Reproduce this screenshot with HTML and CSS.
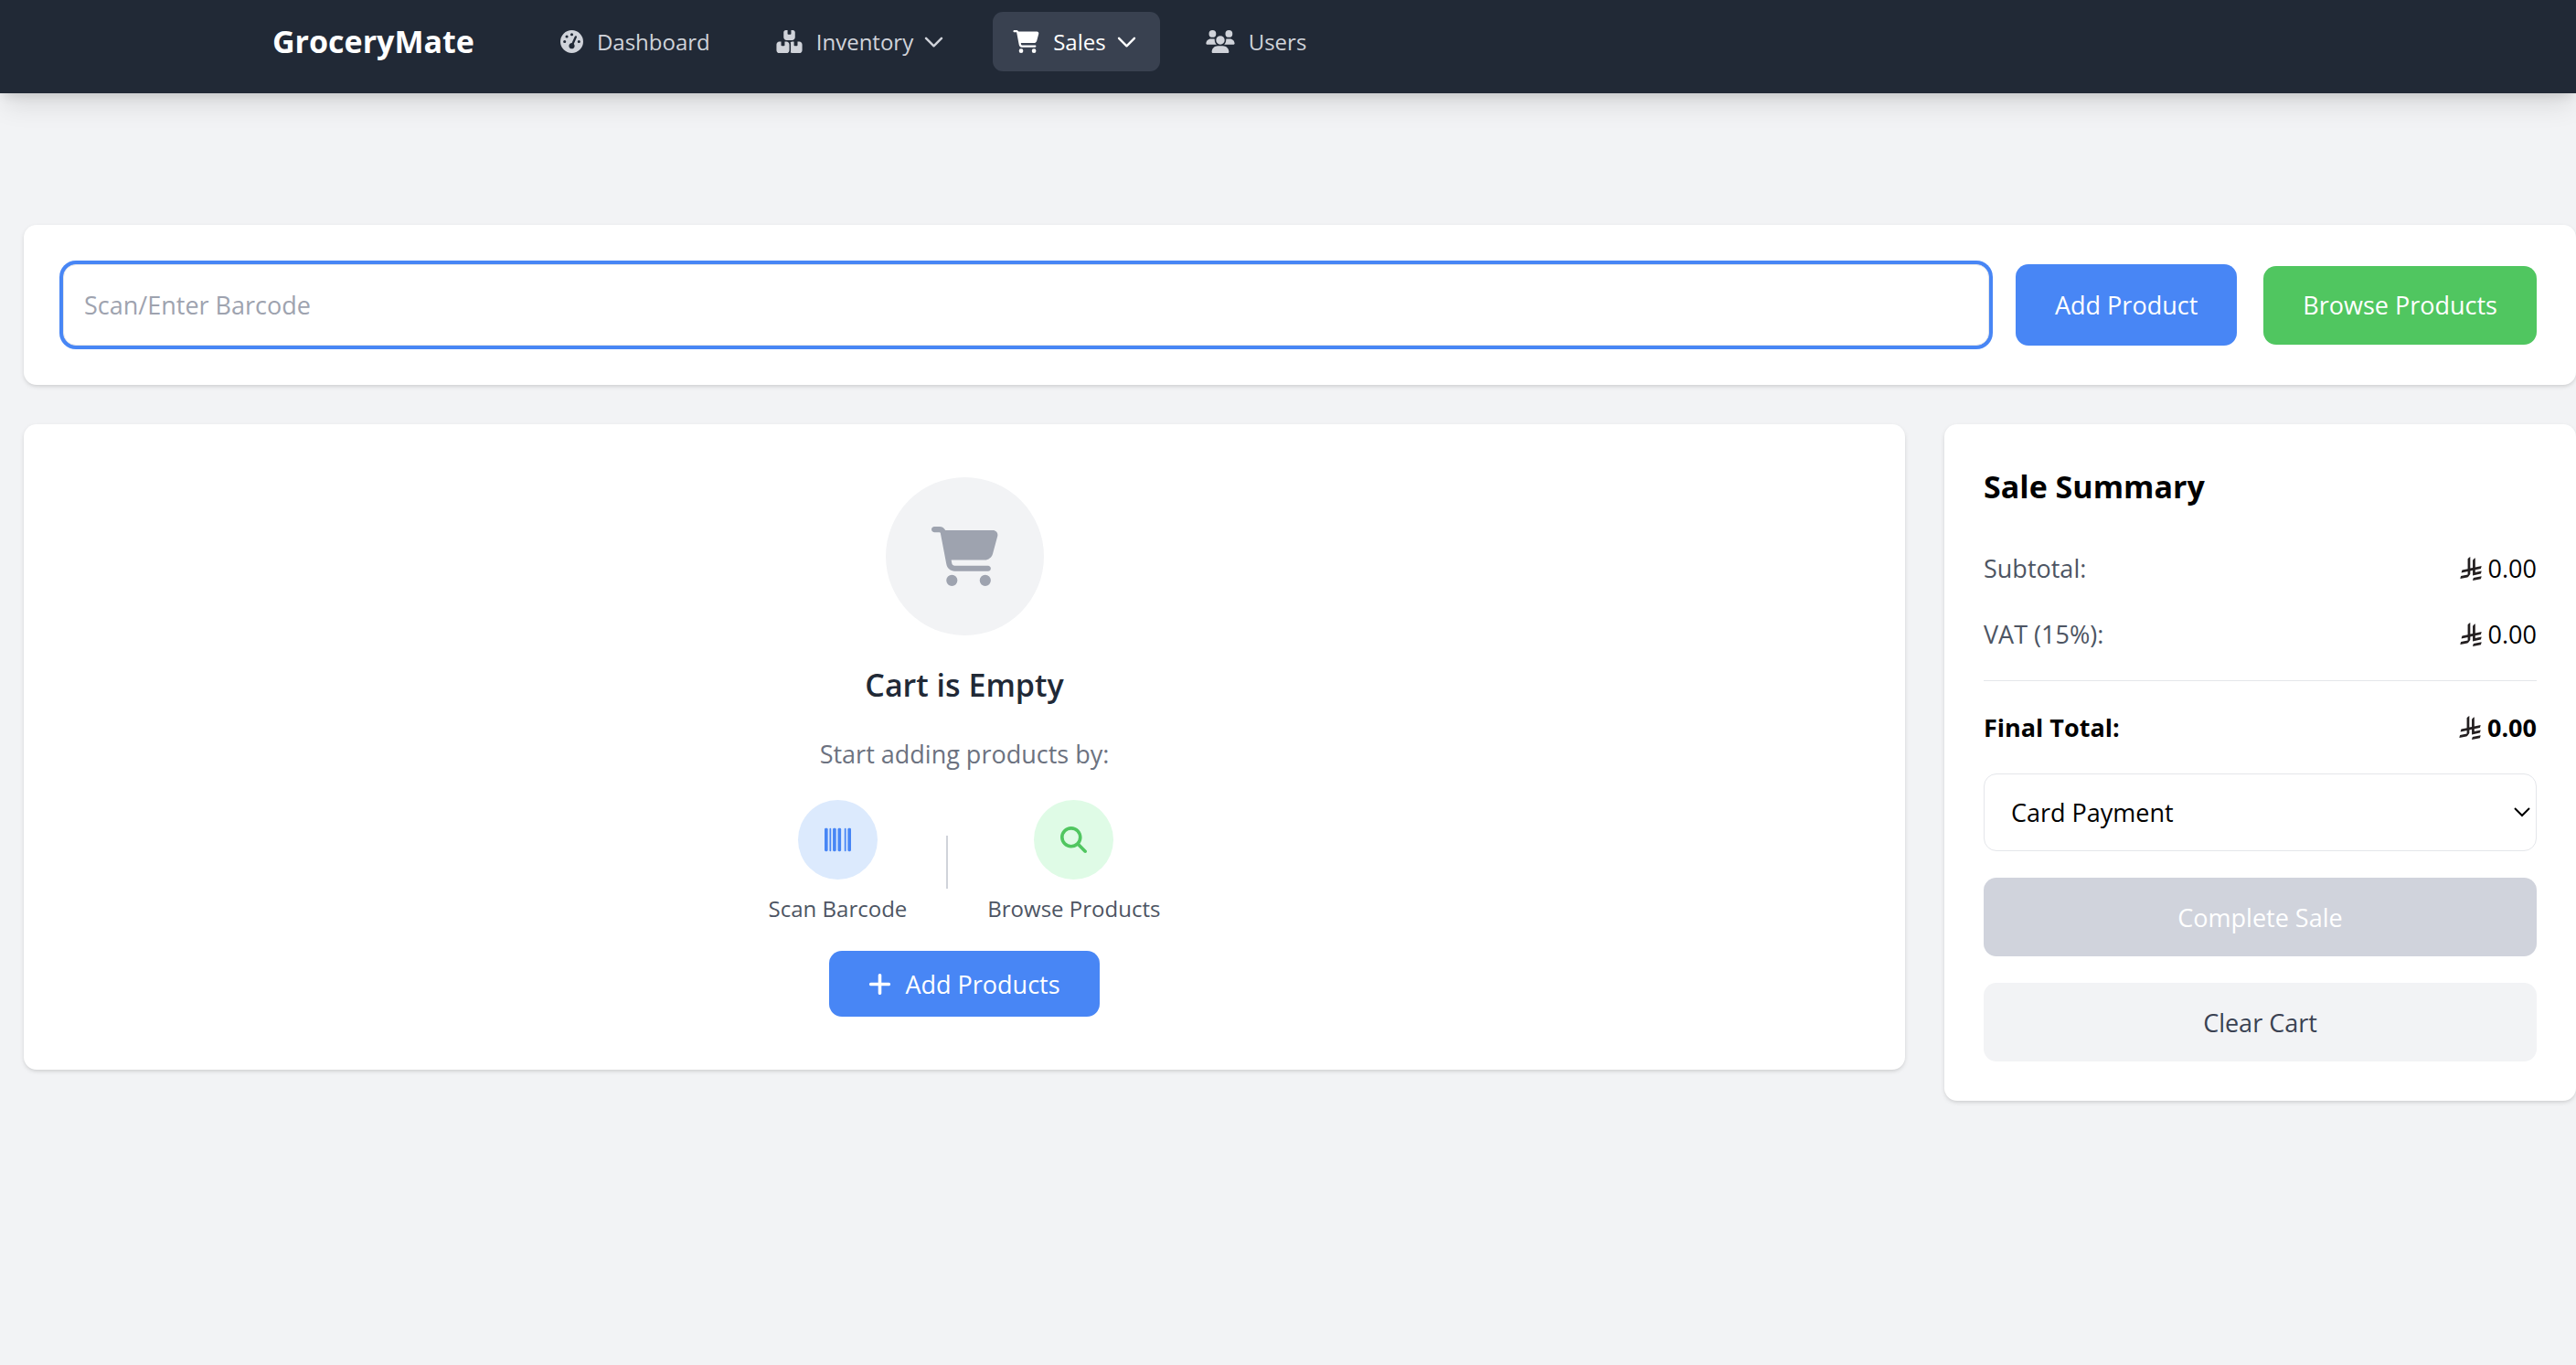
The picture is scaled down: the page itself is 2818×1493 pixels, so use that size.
FILE: index.html
```html
<!DOCTYPE html>
<html lang="en">
<head>
<meta charset="utf-8">
<title>GroceryMate</title>
<meta name="viewport" content="width=device-width, initial-scale=1">
<link rel="stylesheet" href="styles.css">
</head>
<body>
<svg class="sprite" aria-hidden="true">
  <symbol id="cart" viewBox="0 0 576 512"><path d="M0 24C0 10.700 10.700 0 24 0L69.500 0c22 0 41.500 12.800 50.600 32l411 0c26.300 0 45.500 25 38.600 50.400l-41 152.300c-8.500 31.400-37 53.300-69.500 53.300l-288.500 0 5.400 28.500c2.200 11.300 12.100 19.500 23.600 19.500L488 336c13.300 0 24 10.700 24 24s-10.700 24-24 24l-288.300 0c-34.600 0-64.300-24.600-70.700-58.500L77.400 54.500c-.7-3.800-4-6.500-7.900-6.500L24 48C10.700 48 0 37.300 0 24zM128 464a48 48 0 1 1 96 0 48 48 0 1 1 -96 0zm336-48a48 48 0 1 1 0 96 48 48 0 1 1 0-96z"/></symbol>
  <symbol id="riyal" viewBox="0 0 1124.14 1256.39"><path d="M699.620 1113.020c-20.060 44.480-33.320 92.750-38.400 143.370l424.510-90.240c20.060-44.470 33.310-92.750 38.400-143.370l-424.510 90.240Z"/><path d="M1085.730 895.800c20.060-44.470 33.320-92.750 38.400-143.370l-330.680 70.330v-135.200l292.270-62.110c20.060-44.470 33.320-92.750 38.400-143.370l-330.680 70.270V66.130c-50.670 28.450-95.670 66.320-132.250 110.990v403.350l-132.250 28.110V0c-50.670 28.440-95.670 66.320-132.250 110.990v525.690l-295.910 62.880c-20.060 44.470-33.330 92.750-38.420 143.370l334.330-71.050v170.260l-358.300 76.140c-20.060 44.470-33.320 92.750-38.400 143.370l375.040-79.700c30.530-6.350 56.770-24.400 73.830-49.240l68.780-101.970v-.02c7.140-10.550 11.300-23.270 11.300-36.970v-149.980l132.250-28.110v270.400l424.530-90.280Z"/></symbol>
  <symbol id="chevron" viewBox="0 0 24 24"><path d="M19 9l-7 7-7-7" fill="none" stroke="currentColor" stroke-width="2" stroke-linecap="round" stroke-linejoin="round"/></symbol>
</svg>

<nav class="navbar">
  <a class="brand" href="#">GroceryMate</a>
  <div class="nav-links">
    <a class="nav-item" href="#">
      <svg class="nav-icon" viewBox="0 0 512 512"><path d="M0 256a256 256 0 1 1 512 0A256 256 0 1 1 0 256zM288 96a32 32 0 1 0 -64 0 32 32 0 1 0 64 0zM256 416c35.300 0 64-28.700 64-64c0-17.400-6.900-33.100-18.100-44.600L366 161.700c5.300-12.100-.2-26.300-12.300-31.600s-26.300 .2-31.600 12.300L257.900 288c-.6 0-1.300 0-1.900 0c-35.300 0-64 28.700-64 64s28.700 64 64 64zM176 144a32 32 0 1 0 -64 0 32 32 0 1 0 64 0zM96 288a32 32 0 1 0 0-64 32 32 0 1 0 0 64zm352-32a32 32 0 1 0 -64 0 32 32 0 1 0 64 0z"/></svg>
      Dashboard
    </a>
    <button class="nav-item" type="button">
      <svg class="nav-icon wide" viewBox="0 0 576 512"><path d="M248 0L208 0c-26.500 0-48 21.500-48 48l0 112c0 35.300 28.700 64 64 64l128 0c35.300 0 64-28.700 64-64l0-112c0-26.500-21.500-48-48-48L328 0l0 80c0 8.800-7.200 16-16 16l-48 0c-8.800 0-16-7.200-16-16l0-80zM64 256c-35.300 0-64 28.700-64 64L0 448c0 35.300 28.700 64 64 64l160 0c35.300 0 64-28.700 64-64l0-128c0-35.300-28.700-64-64-64l-40 0 0 80c0 8.800-7.200 16-16 16l-48 0c-8.800 0-16-7.200-16-16l0-80-40 0zM352 512l160 0c35.300 0 64-28.700 64-64l0-128c0-35.300-28.700-64-64-64l-40 0 0 80c0 8.800-7.200 16-16 16l-48 0c-8.800 0-16-7.200-16-16l0-80-40 0c-15 0-28.800 5.100-39.700 13.800c4.900 10.400 7.700 22 7.700 34.200l0 160c0 12.200-2.800 23.800-7.700 34.200C323.200 506.900 337 512 352 512z"/></svg>
      Inventory
      <svg class="chevron"><use href="#chevron"/></svg>
    </button>
    <button class="nav-item active" type="button">
      <svg class="nav-icon wide"><use href="#cart"/></svg>
      Sales
      <svg class="chevron"><use href="#chevron"/></svg>
    </button>
    <a class="nav-item" href="#">
      <svg class="nav-icon wider" viewBox="0 0 640 512"><path d="M144 0a80 80 0 1 1 0 160A80 80 0 1 1 144 0zM512 0a80 80 0 1 1 0 160A80 80 0 1 1 512 0zM0 298.700C0 239.800 47.800 192 106.700 192l42.700 0c15.900 0 31 3.500 44.600 9.700c-1.300 7.200-1.900 14.700-1.900 22.300c0 38.200 16.800 72.500 43.300 96c-.2 0-.4 0-.7 0L21.300 320C9.600 320 0 310.400 0 298.700zM405.300 320c-.2 0-.4 0-.7 0c26.600-23.500 43.300-57.800 43.300-96c0-7.600-.7-15-1.900-22.300c13.600-6.300 28.700-9.700 44.600-9.700l42.700 0C592.200 192 640 239.800 640 298.700c0 11.800-9.600 21.300-21.300 21.300l-213.300 0zM224 224a96 96 0 1 1 192 0 96 96 0 1 1 -192 0zM128 485.300C128 411.700 187.700 352 261.300 352l117.300 0C452.300 352 512 411.700 512 485.300c0 14.700-11.900 26.700-26.700 26.700l-330.700 0c-14.700 0-26.700-11.900-26.700-26.700z"/></svg>
      Users
    </a>
  </div>
</nav>

<main class="page">
  <form class="card scan">
    <input class="barcode" type="text" placeholder="Scan/Enter Barcode" aria-label="Scan/Enter Barcode">
    <button class="btn blue stretch" type="button">Add Product</button>
    <button class="btn green" type="button">Browse Products</button>
  </form>

  <div class="columns">
    <section class="card cart">
      <div class="cart-badge"><svg class="cart-icon"><use href="#cart"/></svg></div>
      <h3 class="cart-title">Cart is Empty</h3>
      <p class="cart-hint">Start adding products by:</p>
      <div class="ways">
        <div class="way">
          <div class="way-badge light-blue"><svg class="way-icon" viewBox="0 0 512 512"><rect x="0" y="32" width="64" height="448" rx="24"/><rect x="96" y="32" width="32" height="448" rx="16"/><rect x="160" y="32" width="64" height="448" rx="24"/><rect x="256" y="32" width="64" height="448" rx="24"/><rect x="384" y="32" width="32" height="448" rx="16"/><rect x="448" y="32" width="64" height="448" rx="24"/></svg></div>
          <p class="way-label">Scan Barcode</p>
        </div>
        <div class="divider"></div>
        <div class="way">
          <div class="way-badge light-green"><svg class="way-icon" viewBox="0 0 512 512"><path d="M416 208c0 45.900-14.900 88.300-40 122.700L502.600 457.400c12.500 12.500 12.500 32.800 0 45.300s-32.800 12.500-45.300 0L330.700 376c-34.400 25.200-76.800 40-122.700 40C93.100 416 0 322.900 0 208S93.100 0 208 0S416 93.100 416 208zM208 352a144 144 0 1 0 0-288 144 144 0 1 0 0 288z"/></svg></div>
          <p class="way-label">Browse Products</p>
        </div>
      </div>
      <button class="btn blue compact" type="button">
        <svg class="plus" viewBox="0 0 448 512"><path d="M256 80c0-17.700-14.300-32-32-32s-32 14.300-32 32l0 144L48 224c-17.700 0-32 14.300-32 32s14.300 32 32 32l144 0 0 144c0 17.700 14.300 32 32 32s32-14.300 32-32l0-144 144 0c17.700 0 32-14.300 32-32s-14.300-32-32-32l-144 0 0-144z"/></svg>
        Add Products
      </button>
    </section>

    <aside class="card summary">
      <h2 class="summary-title">Sale Summary</h2>
      <div class="rows">
        <div class="row"><span class="row-label">Subtotal:</span><span class="amount"><svg class="riyal"><use href="#riyal"/></svg>0.00</span></div>
        <div class="row"><span class="row-label">VAT (15%):</span><span class="amount"><svg class="riyal"><use href="#riyal"/></svg>0.00</span></div>
        <div class="row total"><span>Final Total:</span><span class="amount"><svg class="riyal"><use href="#riyal"/></svg>0.00</span></div>
        <div class="select-box">
          <select class="payment" aria-label="Payment method"><option>Card Payment</option><option>Cash</option></select>
          <svg class="select-arrow" viewBox="0 0 18 11"><path d="M1 1l8 8 8-8" fill="none" stroke="currentColor" stroke-width="2"/></svg>
        </div>
        <button class="btn disabled" type="button" disabled>Complete Sale</button>
        <button class="btn gray" type="button">Clear Cart</button>
      </div>
    </aside>
  </div>
</main>
</body>
</html>
```
FILE: styles.css
```css
*, *::before, *::after { box-sizing: border-box; }

body {
  margin: 0;
  min-height: 100vh;
  background: #f2f3f5;
  color: #000;
  font-family: "Open Sans", "Noto Sans", sans-serif;
  font-size: 27px;
  line-height: 43px;
}

h2, h3, p { margin: 0; }
button, input, select { font: inherit; }
svg { display: block; fill: currentColor; flex: none; }
.sprite { position: absolute; width: 0; height: 0; }

.navbar {
  display: flex;
  align-items: center;
  gap: 72px;
  height: 102px;
  padding: 0 298px 12px;
  background: #212936;
  box-shadow: 0 18px 27px -5px rgba(0, 0, 0, .1), 0 7px 11px -4px rgba(0, 0, 0, .1);
}
.brand { color: #fff; font-size: 34px; font-weight: 700; text-decoration: none; }
.nav-links { display: flex; gap: 28px; }
.nav-item {
  display: flex;
  align-items: center;
  height: 65px;
  padding: 0 22px;
  border: 0;
  border-radius: 11px;
  background: none;
  color: #d0d3da;
  font-size: 24px;
  font-weight: 500;
  text-decoration: none;
}
.nav-item.active { background: #394150; color: #fff; }
.nav-icon { width: 25px; height: 25px; margin-right: 15px; }
.nav-icon.wide { width: 29px; }
.nav-icon.wider { width: 32px; }
.chevron { width: 29px; height: 29px; margin-left: 8px; }

.page { padding: 144px 0 43px 26px; }
.card {
  padding: 43px;
  border-radius: 14px;
  background: #fff;
  box-shadow: 0 2px 5px rgba(0, 0, 0, .1), 0 2px 4px -2px rgba(0, 0, 0, .1);
}

.scan { display: flex; align-items: center; gap: 29px; margin-bottom: 43px; }
.barcode {
  flex: 1;
  min-width: 0;
  height: 89px;
  padding: 0 22px;
  border: 1px solid #e4e6ea;
  border-radius: 14px;
  outline: 0;
  background: #fff;
  box-shadow: 0 0 0 4px #4886f5;
}
.barcode::placeholder { color: #9ea3af; opacity: 1; }

.btn {
  display: flex;
  align-items: center;
  justify-content: center;
  height: 86px;
  padding: 0 43px;
  border: 0;
  border-radius: 14px;
  color: #fff;
  white-space: nowrap;
}
.btn.stretch { height: 89px; }
.btn.compact { height: 72px; }
.btn.blue { background: #4886f5; }
.btn.green { background: #50c660; }
.btn.disabled { background: #d0d3dc; }
.btn.gray { background: #f2f3f5; color: #3a4252; }

.columns { display: flex; align-items: flex-start; gap: 43px; }
.cart {
  flex: 1;
  display: flex;
  flex-direction: column;
  align-items: center;
  gap: 29px;
  padding: 58px;
}
.cart-badge {
  display: grid;
  place-items: center;
  width: 173px;
  height: 173px;
  border-radius: 50%;
  background: #f2f3f5;
  color: #9ea3af;
}
.cart-icon { width: 73px; height: 65px; }
.cart-title { color: #212936; font-size: 34px; font-weight: 600; line-height: 50px; }
.cart-hint { color: #6c7280; }
.ways { display: flex; align-items: center; gap: 43px; }
.way { display: flex; flex-direction: column; align-items: center; gap: 14px; }
.way-badge { display: grid; place-items: center; width: 87px; height: 87px; border-radius: 50%; }
.light-blue { background: #dceafd; color: #4886f5; }
.light-green { background: #dffbe6; color: #50c660; }
.way-icon { width: 29px; height: 29px; }
.way-label { color: #4d5563; font-size: 24px; line-height: 35px; }
.divider { width: 2px; height: 58px; background: #d0d3da; }
.plus { width: 25px; height: 29px; margin-right: 15px; }

.summary { width: 691px; flex: none; }
.summary-title { margin-bottom: 43px; font-size: 34px; font-weight: 700; line-height: 50px; }
.rows { display: flex; flex-direction: column; gap: 29px; }
.row { display: flex; justify-content: space-between; }
.row-label { color: #4d5563; }
.amount { display: flex; align-items: center; gap: 7px; }
.riyal { width: 24px; height: 26px; color: #231f20; }
.total { padding-top: 29px; border-top: 1px solid #e4e6ea; font-weight: 700; }
.select-box { display: grid; align-items: center; }
.payment {
  grid-area: 1 / 1;
  width: 100%;
  height: 85px;
  padding: 0 29px;
  border: 1px solid #e4e6ea;
  border-radius: 14px;
  background: #fff;
  color: #000;
  appearance: none;
}
.select-arrow { grid-area: 1 / 1; justify-self: end; width: 18px; height: 11px; margin-right: 7px; pointer-events: none; }
```
